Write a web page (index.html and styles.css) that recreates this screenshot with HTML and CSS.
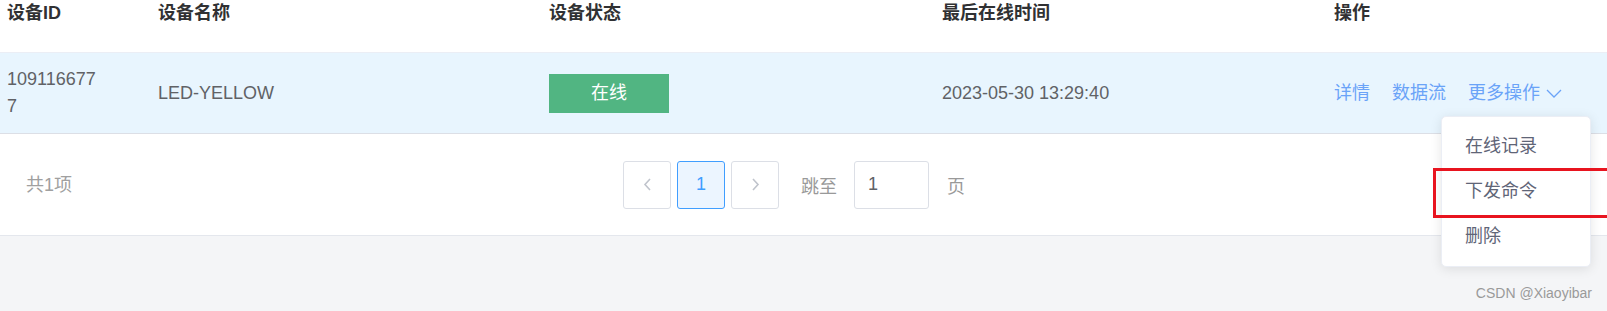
FILE: index.html
```html
<!DOCTYPE html>
<html>
<head>
  <title>设备列表</title>
  <link rel="stylesheet" href="styles.css">
</head>
<body>
  <div class="table">
    <div class="row head">
      <div class="cell">设备ID</div>
      <div class="cell">设备名称</div>
      <div class="cell">设备状态</div>
      <div class="cell">最后在线时间</div>
      <div class="cell">操作</div>
    </div>
    <div class="row body-row">
      <div class="cell"><span class="dev-id">1091166777</span></div>
      <div class="cell">LED-YELLOW</div>
      <div class="cell"><span class="status">在线</span></div>
      <div class="cell">2023-05-30 13:29:40</div>
      <div class="cell actions">
        <a class="link">详情</a>
        <a class="link">数据流</a>
        <a class="link more">更多操作
          <svg width="16" height="9" viewBox="0 0 16 9"><polyline points="1,1 8,8 15,1" fill="none" stroke="currentColor" stroke-width="1.3"/></svg>
        </a>
      </div>
    </div>
  </div>

  <div class="footer">
    <span class="total">共1项</span>
    <div class="pager">
      <button class="btn">
        <svg width="9" height="13" viewBox="0 0 9 13"><polyline points="7,1 2,6.5 7,12" fill="none" stroke="#c0c4cc" stroke-width="1.6"/></svg>
      </button>
      <button class="btn current">1</button>
      <button class="btn">
        <svg width="9" height="13" viewBox="0 0 9 13"><polyline points="2,1 7,6.5 2,12" fill="none" stroke="#c0c4cc" stroke-width="1.6"/></svg>
      </button>
      <span class="jump">跳至</span>
      <input class="page-input" type="text" value="1">
      <span class="jump unit">页</span>
    </div>
  </div>

  <div class="bottom">
    <span class="watermark">CSDN @Xiaoyibar</span>
  </div>

  <ul class="dropdown">
    <li>在线记录</li>
    <li>下发命令</li>
    <li>删除</li>
  </ul>
  <div class="mark"></div>
</body>
</html>
```

FILE: styles.css
```css
body {
  margin: 0;
  background-color: #f4f5f7;
  font-family: "Liberation Sans", "Noto Sans CJK SC", sans-serif;
  font-size: 18px;
  color: #606266;
  overflow: hidden;
}

.table {
  background-color: #fff;
}
.row {
  display: grid;
  grid-template-columns: 151px 391px 393px 392px 1fr;
}
.cell {
  padding-left: 7px;
}

.head {
  height: 52px;
  border-bottom: 1px solid #ebeef5;
  font-weight: bold;
  color: #303133;
  line-height: 27px;
}

.body-row {
  height: 80px;
  background-color: #e8f5fe;
  border-bottom: 1px solid #dcdfe6;
  align-items: center;
  line-height: 27px;
}
.dev-id {
  display: block;
  width: 95px;
  word-break: break-all;
}
.status {
  display: inline-block;
  width: 120px;
  height: 39px;
  line-height: 39px;
  text-align: center;
  background-color: #51b582;
  color: #fff;
}

.actions {
  display: flex;
  align-items: center;
  gap: 22px;
}
.link {
  color: #6aa3f8;
  cursor: pointer;
}
.more {
  display: flex;
  align-items: center;
  gap: 6px;
}

.footer {
  display: flex;
  align-items: center;
  height: 101px;
  padding-left: 26px;
  background-color: #fff;
  border-bottom: 1px solid #e4e7ed;
}
.total {
  width: 597px;
  margin-top: -3px;
  color: #a0a0a0;
}
.pager {
  display: flex;
  align-items: center;
  gap: 6px;
}
.btn {
  width: 48px;
  height: 48px;
  padding: 0;
  border: 1px solid #dcdfe6;
  border-radius: 3px;
  background-color: #fff;
  display: flex;
  align-items: center;
  justify-content: center;
  font-family: inherit;
  font-size: 18px;
}
.btn.current {
  background-color: #ecf5ff;
  border-color: #409eff;
  color: #409eff;
}
.jump {
  margin-left: 16px;
  color: #999;
}
.unit {
  margin-left: 12px;
}
.page-input {
  width: 75px;
  height: 48px;
  box-sizing: border-box;
  margin-left: 11px;
  padding: 0 13px;
  border: 1px solid #dcdfe6;
  border-radius: 3px;
  font-family: inherit;
  font-size: 18px;
  color: #606266;
}

.bottom {
  height: 74px;
  position: relative;
}
.watermark {
  position: absolute;
  right: 15px;
  top: 49px;
  font-size: 14px;
  color: #9a9a9a;
}

.dropdown {
  position: absolute;
  left: 1441px;
  top: 116px;
  width: 150px;
  margin: 0;
  padding: 7px 0 7px;
  list-style: none;
  background-color: #fff;
  border: 1px solid #ebeef5;
  border-radius: 5px;
  box-shadow: 0 2px 12px rgba(0, 0, 0, 0.1);
  box-sizing: border-box;
}
.dropdown li {
  height: 45px;
  line-height: 45px;
  padding-left: 23px;
  color: #5f6577;
}

.mark {
  position: absolute;
  left: 1433px;
  right: 0;
  top: 168px;
  height: 44px;
  border: 3px solid #e8141f;
  border-right: none;
}
```
